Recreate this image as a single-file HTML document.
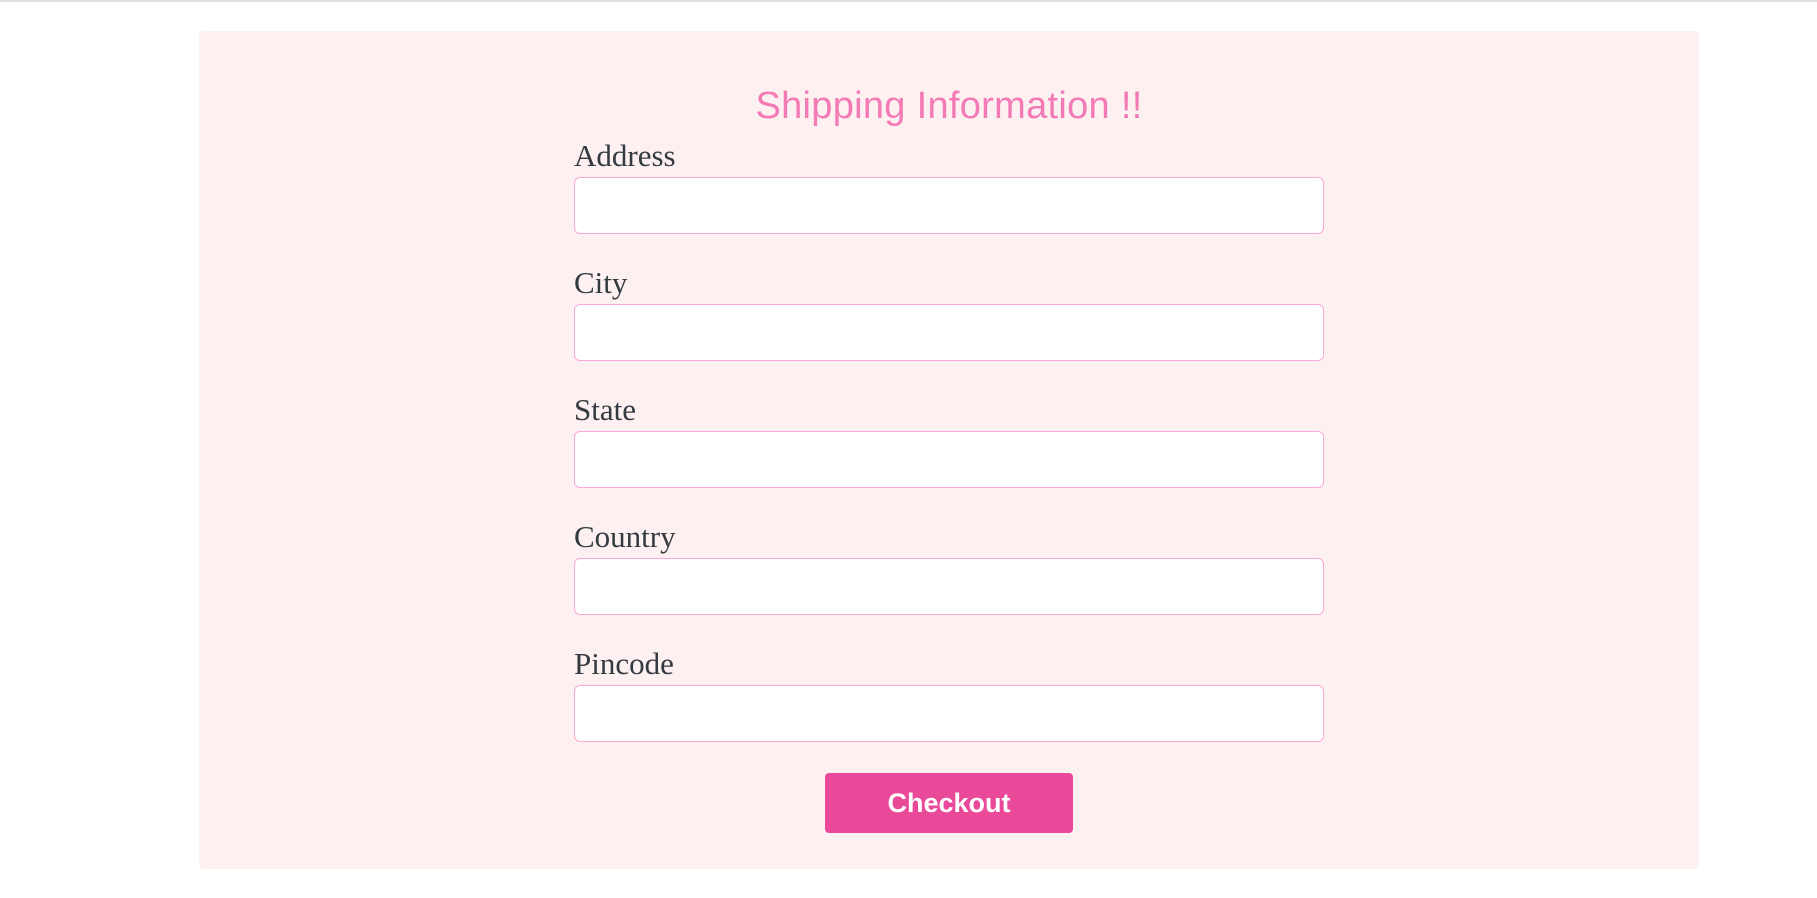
<!DOCTYPE html>
<html><head><meta charset="utf-8"><style>
html,body{margin:0;padding:0;width:1817px;height:898px;background:#fff;overflow:hidden;position:relative}
.topline{position:absolute;left:0;top:0;width:1817px;height:2px;background:#e0e0e0}
.card{position:absolute;left:199px;top:31px;width:1500px;height:838px;background:#fdf0f1;border-radius:5px}
.title{position:absolute;left:199px;width:1500px;top:84px;text-align:center;font-family:"Liberation Sans","DejaVu Sans",sans-serif;font-size:38px;color:#f47ab5;line-height:44px;letter-spacing:0.3px}
.lbl{position:absolute;left:574px;font-family:"Liberation Serif",serif;font-size:31px;color:#333a40;line-height:34px}
.inp{position:absolute;left:574px;width:750px;height:57px;background:#fff;border:1px solid #f9a9d6;border-radius:6px;box-sizing:border-box}
.btn{position:absolute;left:825px;top:773px;width:248px;height:60px;background:#ea4899;border-radius:4px;color:#fff;font-family:"Liberation Sans","DejaVu Sans",sans-serif;font-weight:bold;font-size:27px;line-height:60px;text-align:center}
</style></head><body>
<div class="topline"></div>
<div class="card"></div>
<div class="title">Shipping Information !!</div>
<div class="lbl" style="top:139px">Address</div>
<div class="inp" style="top:177px"></div>
<div class="lbl" style="top:266px">City</div>
<div class="inp" style="top:304px"></div>
<div class="lbl" style="top:393px">State</div>
<div class="inp" style="top:431px"></div>
<div class="lbl" style="top:520px">Country</div>
<div class="inp" style="top:558px"></div>
<div class="lbl" style="top:647px">Pincode</div>
<div class="inp" style="top:685px"></div>
<div class="btn">Checkout</div>
</body></html>
